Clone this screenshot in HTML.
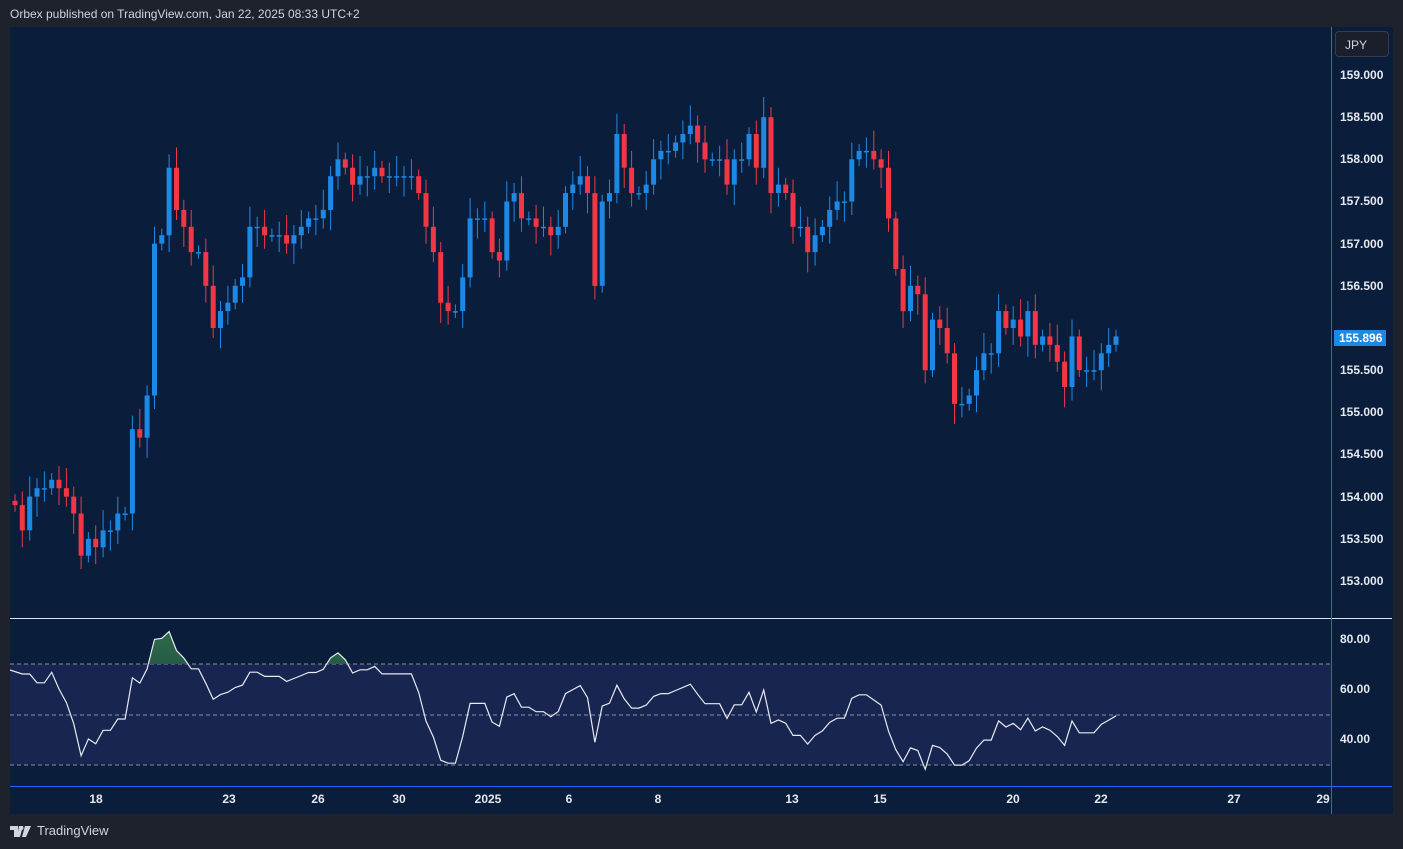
<!DOCTYPE html>
<html><head><meta charset="utf-8">
<style>
*{margin:0;padding:0;box-sizing:border-box}
body{width:1403px;height:849px;background:#1e222d;overflow:hidden;font-family:"Liberation Sans",sans-serif;position:relative}
.hdr{position:absolute;left:10px;top:7px;font-size:12px;color:#d1d4dc}
.chart{position:absolute;left:10px;top:27px;width:1383px;height:787px;background:#0a1e3c}
.lbl{position:absolute;font-size:12px;color:#e6e8ee;font-weight:bold}
.foot{position:absolute;left:10px;top:823px;font-size:13px;color:#d1d4dc;display:flex;align-items:center;gap:5px}
</style></head><body>
<div class="hdr">Orbex published on TradingView.com, Jan 22, 2025 08:33 UTC+2</div>
<div class="chart"></div>
<svg id="s" width="1403" height="849" style="position:absolute;left:0;top:0">
<defs><clipPath id="ob"><rect x="10" y="620" width="1321" height="44"/></clipPath>
<linearGradient id="gg" x1="0" y1="0" x2="0" y2="1"><stop offset="0" stop-color="#2e6b4a"/><stop offset="1" stop-color="#0e2a3a"/></linearGradient></defs>
<rect x="10" y="664" width="1321" height="101" fill="#182550"/>
<line x1="10" y1="664" x2="1331" y2="664" stroke="#8a8f9c" stroke-dasharray="4,3"/>
<line x1="10" y1="715" x2="1331" y2="715" stroke="#8a8f9c" stroke-dasharray="4,3"/>
<line x1="10" y1="765" x2="1331" y2="765" stroke="#8a8f9c" stroke-dasharray="4,3"/>
<line x1="10" y1="618.5" x2="1392" y2="618.5" stroke="#e0e3eb" stroke-width="1"/>
<line x1="1331.5" y1="27" x2="1331.5" y2="814" stroke="#2962ff"/>
<line x1="10" y1="786.5" x2="1392" y2="786.5" stroke="#2962ff"/>
<g id="c"></g>
<polygon id="rf" fill="url(#gg)" clip-path="url(#ob)"/>
<polyline id="r" fill="none" stroke="#e8eaf0" stroke-width="1.2"/>
</svg>
<div style="position:absolute;left:1335px;top:31px;width:54px;height:26px;background:#1a1f2b;border:1px solid #363c4e;border-radius:4px;color:#d1d4dc;font-size:12px;padding:6px 0 0 9px">JPY</div>
<div id="lb"></div>
<div class="lbl" style="left:1334px;top:330px;width:52px;height:16px;background:#1e88e5;color:#fff;padding:1px 0 0 5px">155.896</div>
<div class="foot"><svg width="22" height="14" viewBox="0 0 22 14"><path d="M0 2h8v11H4V6H0z M9 2h4l-3 11H7z" fill="#d1d4dc"/><circle cx="11.5" cy="4" r="2" fill="#d1d4dc"/><path d="M15 2h6l-5 11h-4z" fill="#d1d4dc"/></svg>TradingView</div>
<script>
var C=[153.9,153.6,154.0,154.1,154.1,154.2,154.1,154.0,153.8,153.3,153.5,153.4,153.6,153.6,153.8,153.8,154.8,154.7,155.2,157.0,157.1,157.9,157.4,157.2,156.9,156.9,156.5,156.0,156.2,156.3,156.5,156.6,157.2,157.2,157.1,157.1,157.1,157.0,157.1,157.2,157.3,157.3,157.4,157.8,158.0,157.9,157.7,157.8,157.8,157.9,157.8,157.8,157.8,157.8,157.8,157.6,157.2,156.9,156.3,156.2,156.2,156.6,157.3,157.3,157.3,156.9,156.8,157.5,157.6,157.3,157.3,157.2,157.2,157.1,157.2,157.6,157.7,157.8,157.6,156.5,157.5,157.6,158.3,157.9,157.6,157.6,157.7,158.0,158.1,158.1,158.2,158.3,158.4,158.2,158.0,158.0,158.0,157.7,158.0,158.0,158.3,157.9,158.5,157.6,157.7,157.6,157.2,157.2,156.9,157.1,157.2,157.4,157.5,157.5,158.0,158.1,158.1,158.0,157.9,157.3,156.7,156.2,156.5,156.4,155.5,156.1,156.0,155.7,155.1,155.1,155.2,155.5,155.7,155.7,156.2,156.0,156.1,155.9,156.2,155.8,155.9,155.8,155.6,155.3,155.9,155.5,155.5,155.5,155.7,155.8,155.9];
var n=C.length,sp=(1116-15)/(n-1),Y=function(p){return 75+(159-p)*84.33},h='';
for(var i=0;i<n;i++){var o=i?C[i-1]:153.95,c=C[i],x=15+i*sp,up=c>=o,col=up?'#1e88e5':'#f23645';
var hi=Math.max(o,c)+0.08+((i*7)%5)*0.04,lo=Math.min(o,c)-0.08-((i*3)%5)*0.04;
h+='<line x1="'+x.toFixed(1)+'" x2="'+x.toFixed(1)+'" y1="'+Y(hi).toFixed(1)+'" y2="'+Y(lo).toFixed(1)+'" stroke="'+col+'"/>';
var t=Y(Math.max(o,c)),b=Y(Math.min(o,c));if(b-t<1.5)b=t+1.5;
h+='<rect x="'+(x-2.5).toFixed(1)+'" y="'+t.toFixed(1)+'" width="5" height="'+(b-t).toFixed(1)+'" fill="'+col+'"/>';}
document.getElementById('c').innerHTML=h;
var pts=[],ag=0,al=0,N=14;
for(var i=1;i<n;i++){var d=C[i]-C[i-1],g=Math.max(d,0),l=Math.max(-d,0);
if(i<=N){ag+=g/N;al+=l/N;}else{ag=(ag*(N-1)+g)/N;al=(al*(N-1)+l)/N;}
var rs=al==0?100:100-100/(1+ag/al);if(i<3)rs=66;rs=Math.min(83,Math.max(27,rs));
pts.push((15+i*sp).toFixed(1)+','+(639+(80-rs)*2.5).toFixed(1));}
pts.unshift('10,670');
document.getElementById('r').setAttribute('points',pts.join(' '));
document.getElementById('rf').setAttribute('points','10,664 '+pts.join(' ')+' 1116,664');
var L='';for(var k=0;k<13;k++){var p=159-k*0.5;if(k==6)continue;L+='<div class="lbl" style="left:1340px;top:'+(Y(p)-7)+'px">'+p.toFixed(3)+'</div>';}
[[80,639],[60,689],[40,739]].forEach(function(a){L+='<div class="lbl" style="left:1340px;top:'+(a[1]-7)+'px">'+a[0].toFixed(2)+'</div>';});
[['18',96],['23',229],['26',318],['30',399],['2025',488],['6',569],['8',658],['13',792],['15',880],['20',1013],['22',1101],['27',1234],['29',1323]].forEach(function(a){L+='<div class="lbl" style="left:'+(a[1]-20)+'px;width:40px;text-align:center;top:792px">'+a[0]+'</div>';});
document.getElementById('lb').innerHTML=L;
</script>
</body></html>
